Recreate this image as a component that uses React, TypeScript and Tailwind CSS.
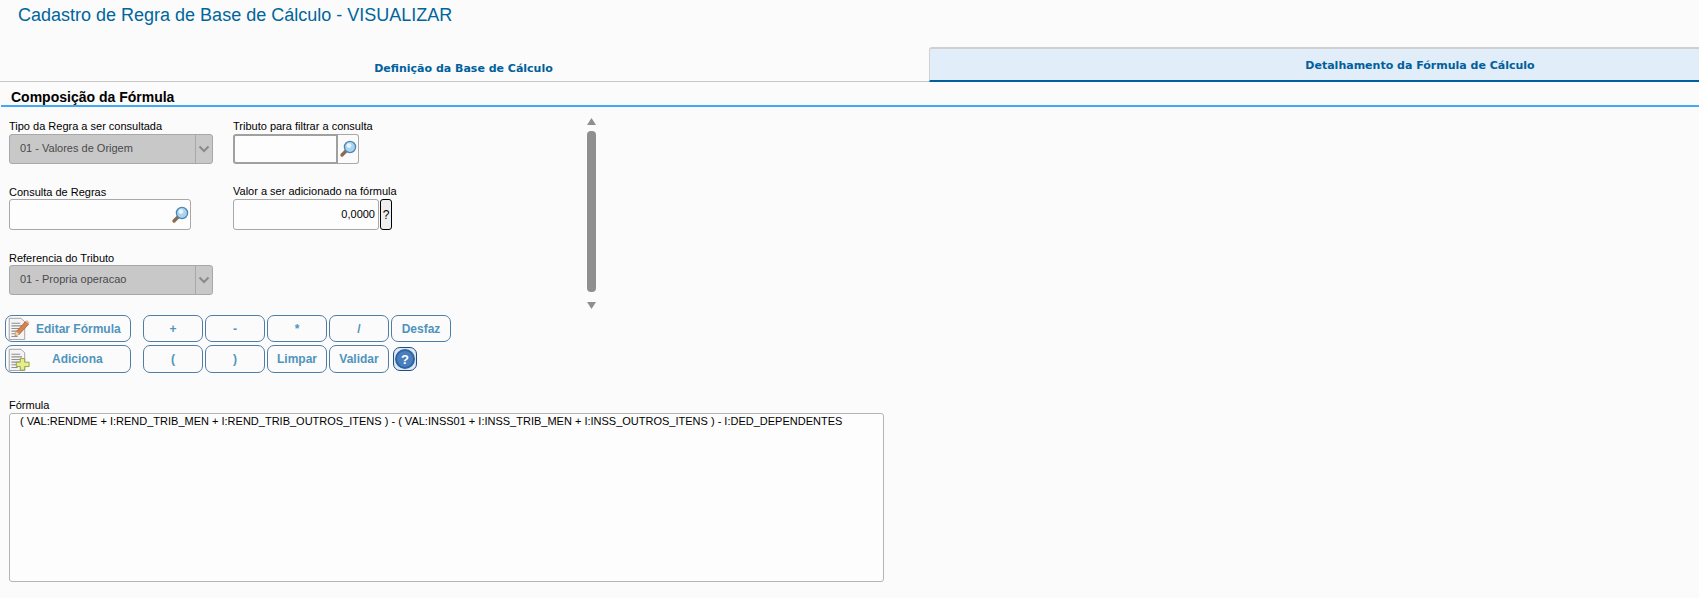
import { ReactNode } from "react";

function Lens() {
  return (
    <svg width="18" height="18" viewBox="0 0 18 18">
      <path d="M7.5 10.5 L3 15" stroke="#8a6a50" strokeWidth="3.4" strokeLinecap="round" />
      <circle cx="11" cy="7" r="5.6" fill="#a9d3f0" stroke="#4a86b0" strokeWidth="1.3" />
      <circle cx="10" cy="5.6" r="2.4" fill="#e8f5fd" />
    </svg>
  );
}

function DocLines() {
  return (
    <>
      <path d="M2.5 1.5 H16 L20 5.5 V25.5 H2.5 Z" fill="#f4f4f4" stroke="#9a9a9a" />
      <path d="M5 7 H15 M5 10 H17 M5 13 H17 M5 16 H14 M5 19 H14 M5 22 H12" stroke="#8f8f8f" strokeWidth="1.2" />
    </>
  );
}

function EditIcon() {
  return (
    <svg width="23" height="23" viewBox="0 0 26 26">
      <DocLines />
      <path d="M9 21 L10.5 16.5 L21 5 L24.5 8 L14 19.5 Z" fill="#d9824a" stroke="#9c5a35" strokeWidth="0.8" />
      <path d="M21 5 L22.6 3.5 L25.5 6.5 L24.5 8 Z" fill="#e9b9a0" />
      <path d="M9 21 L10.5 16.5 L14 19.5 Z" fill="#f0d6b0" />
    </svg>
  );
}

function AddIcon() {
  return (
    <svg width="23" height="23" viewBox="0 0 26 26">
      <DocLines />
      <path d="M15 12 H20 V16 H25 V21 H20 V25 H15 V21 H10.5 V16 H15 Z" fill="#e6ee8c" stroke="#8d9a3c" />
    </svg>
  );
}

function Chevron() {
  return (
    <svg width="12" height="8" viewBox="0 0 12 8">
      <path d="M1.5 1.5 L6 6 L10.5 1.5" fill="none" stroke="#8a8a8a" strokeWidth="2" />
    </svg>
  );
}

function Field({ label, children, className }: { label: string; children: ReactNode; className?: string }) {
  return (
    <div className={className}>
      <div className="h-[14px] text-[11px] leading-[13px] text-black whitespace-nowrap">{label}</div>
      {children}
    </div>
  );
}

function SelectBox({ text }: { text: string }) {
  return (
    <div className="flex h-[30px] w-[204px] items-stretch rounded-[3px] border border-[#a8a8a8] bg-[#c8c8c8]">
      <div className="flex flex-1 items-center pb-[2px] pl-[10px] text-[11px] text-[#4a4a4a]">{text}</div>
      <div className="flex w-[17px] items-center justify-center border-l border-[#a8a8a8]">
        <Chevron />
      </div>
    </div>
  );
}

function Btn({ children, className }: { children: ReactNode; className?: string }) {
  return (
    <div className={`flex items-center rounded-[7px] border border-[#4f7da5] text-[12px] font-bold text-[#4f94bd] ${className}`}>
      {children}
    </div>
  );
}

function OpBtn({ label }: { label: string }) {
  return <Btn className="w-[60px] justify-center">{label}</Btn>;
}

export default function App() {
  return (
    <div className="h-[598px] w-[1699px] overflow-hidden bg-[#fbfbfb] font-['Liberation_Sans',Arial,sans-serif]">
      <div className="h-[47px] pl-[18px] pt-[4px] text-[18px] leading-[22px] text-[#00659c]">
        Cadastro de Regra de Base de Cálculo - VISUALIZAR
      </div>

      <div className="flex h-[35px] font-['DejaVu_Sans',sans-serif] text-[11px] font-bold text-[#00609c]">
        <div className="flex w-[929px] items-center justify-center border-b border-[#c8c8c8] pr-[2px] pt-[11px]">
          Definição da Base de Cálculo
        </div>
        <div className="flex flex-1 items-center justify-center rounded-tl-[3px] border-t-2 border-l border-b-2 border-t-[#d0d0d0] border-l-[#d0d0d0] border-b-[#00609c] bg-[#e1edf9] pl-[211px] pt-[4px]">
          Detalhamento da Fórmula de Cálculo
        </div>
      </div>

      <div className="ml-px h-[25px] border-b-2 border-[#42a9f4] pl-[10px] pt-[7px] text-[14px] font-bold leading-[16px] text-black">
        Composição da Fórmula
      </div>

      <div className="flex h-[208px] pt-[13px]">
        <div className="ml-[9px] w-[204px]">
          <Field label="Tipo da Regra a ser consultada">
            <SelectBox text="01 - Valores de Origem" />
          </Field>
          <Field label="Consulta de Regras" className="mt-[21px] [&>div:first-child]:pt-px">
            <div className="flex h-[31px] w-[182px] items-center justify-end rounded-[3px] border border-[#a8a8a8] bg-[#fdfdfd] pr-[1px]">
              <Lens />
            </div>
          </Field>
          <Field label="Referencia do Tributo" className="mt-[21px] [&>div:first-child]:pt-px">
            <SelectBox text="01 - Propria operacao" />
          </Field>
        </div>

        <div className="ml-[20px] w-[354px]">
          <Field label="Tributo para filtrar a consulta">
            <div className="flex h-[30px]">
              <div className="w-[105px] rounded-l-[3px] border-2 border-[#a0a0a0] bg-[#fdfdfd]" />
              <div className="flex w-[21px] items-center justify-center rounded-r-[3px] border border-l-0 border-[#a8a8a8]">
                <Lens />
              </div>
            </div>
          </Field>
          <Field label="Valor a ser adicionado na fórmula" className="mt-[21px]">
            <div className="flex h-[31px]">
              <div className="flex w-[146px] items-center justify-end rounded-[3px] border border-[#a8a8a8] bg-[#fdfdfd] pr-[3px] text-[11px] text-black">
                0,0000
              </div>
              <div className="ml-px flex w-[12px] items-center justify-center rounded-[3px] border border-black bg-[#efefef] text-[12px] text-black">
                ?
              </div>
            </div>
          </Field>
        </div>

        <div className="-mt-[2px] flex w-[9px] flex-col items-center">
          <svg width="9" height="7" viewBox="0 0 9 7" className="shrink-0">
            <path d="M4.5 0 L9 7 H0 Z" fill="#8f8f8f" />
          </svg>
          <div className="mt-[6px] h-[161px] w-[9px] shrink-0 rounded-[4px] bg-[#8f8f8f]" />
          <svg width="9" height="7" viewBox="0 0 9 7" className="mt-[10px] shrink-0">
            <path d="M0 0 H9 L4.5 7 Z" fill="#8f8f8f" />
          </svg>
        </div>
      </div>

      <div className="ml-[5px] flex h-[27px] gap-[2px]">
        <Btn className="mr-[10px] w-[126px] pl-[1px]">
          <EditIcon />
          <span className="ml-[6px]">Editar Fórmula</span>
        </Btn>
        <OpBtn label="+" />
        <OpBtn label="-" />
        <OpBtn label="*" />
        <OpBtn label="/" />
        <OpBtn label="Desfaz" />
      </div>

      <div className="ml-[5px] mt-[3px] flex h-[28px] gap-[2px]">
        <Btn className="mr-[10px] w-[126px] pl-[1px]">
          <AddIcon />
          <span className="ml-[22px]">Adiciona</span>
        </Btn>
        <OpBtn label="(" />
        <OpBtn label=")" />
        <OpBtn label="Limpar" />
        <OpBtn label="Validar" />
        <div className="ml-[2px] flex h-[24px] w-[24px] items-center justify-center self-center rounded-[7px] border border-[#1f4e86] bg-[#dfe9f5]">
          <div className="flex h-[20px] w-[20px] items-center justify-center rounded-full border-2 border-[#2b63a6] bg-[#4a7fbd] text-[13px] font-bold leading-none text-white">
            ?
          </div>
        </div>
      </div>

      <Field label="Fórmula" className="ml-[9px] mt-[26px]">
        <div className="h-[169px] w-[875px] rounded-[3px] border border-[#b4b4b4] bg-[#fdfdfd] pl-[10px] pt-[1px] text-[11px] leading-[13px] text-black">
          ( VAL:RENDME + I:REND_TRIB_MEN + I:REND_TRIB_OUTROS_ITENS ) - ( VAL:INSS01 + I:INSS_TRIB_MEN + I:INSS_OUTROS_ITENS ) - I:DED_DEPENDENTES
        </div>
      </Field>
    </div>
  );
}
